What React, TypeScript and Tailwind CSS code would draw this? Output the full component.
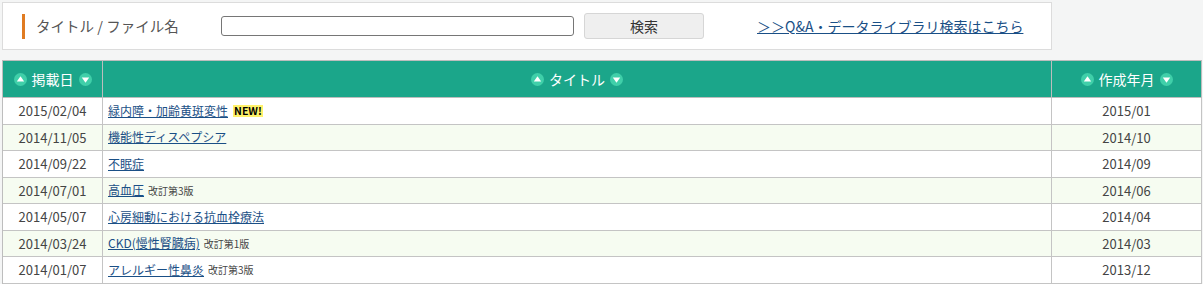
import React from "react";

const rows = [
  { date: "2015/02/04", title: "緑内障・加齢黄斑変性", note: "", isNew: true, ym: "2015/01" },
  { date: "2014/11/05", title: "機能性ディスペプシア", note: "", isNew: false, ym: "2014/10" },
  { date: "2014/09/22", title: "不眠症", note: "", isNew: false, ym: "2014/09" },
  { date: "2014/07/01", title: "高血圧", note: "改訂第3版", isNew: false, ym: "2014/06" },
  { date: "2014/05/07", title: "心房細動における抗血栓療法", note: "", isNew: false, ym: "2014/04" },
  { date: "2014/03/24", title: "CKD(慢性腎臓病)", note: "改訂第1版", isNew: false, ym: "2014/03" },
  { date: "2014/01/07", title: "アレルギー性鼻炎", note: "改訂第3版", isNew: false, ym: "2013/12" },
];

function SortIcon({ up }: { up: boolean }) {
  return (
    <svg width="13" height="13" viewBox="0 0 13 13" className="shrink-0">
      <circle cx="6.5" cy="6.5" r="6.5" fill="#40cfa9" />
      {up ? (
        <path d="M6.5 3.2 L10.2 8.6 L2.8 8.6 Z" fill="#fff" />
      ) : (
        <path d="M2.8 4.4 L10.2 4.4 L6.5 9.8 Z" fill="#fff" />
      )}
    </svg>
  );
}

function HeadCell({ label, className }: { label: string; className: string }) {
  return (
    <div className={`flex items-center justify-center gap-[5px] text-[14px] text-white ${className}`}>
      <SortIcon up />
      <span>{label}</span>
      <SortIcon up={false} />
    </div>
  );
}

export default function App() {
  return (
    <div
      className="w-[1203px] h-[284px] overflow-hidden bg-[#f4f5f5] text-[#444]"
      style={{ fontFamily: '"Noto Sans CJK JP", "Noto Sans", sans-serif' }}
    >
      {/* 検索 */}
      <div className="ml-[2px] mt-[2px] w-[1050px] h-[48px] bg-white border border-[#dcdcdc] flex items-center">
        <div className="ml-[19px] w-[3px] h-[25px] bg-[#e07b22]" />
        <span className="ml-[11px] text-[14.5px] text-[#555] w-[185px]">タイトル / ファイル名</span>
        <input className="w-[353px] h-[20px] border border-[#767676] rounded-[3px] bg-white" />
        <button className="ml-[10px] w-[120px] h-[26px] border border-[#d6d6d6] rounded-[3px] bg-[#efefef] text-[14px] text-[#333]">
          検索
        </button>
        <a href="#" className="ml-[53px] text-[14px] text-[#1a4f86] underline">
          ＞＞Q&amp;A・データライブラリ検索はこちら
        </a>
      </div>

      {/* 一覧 */}
      <div className="ml-[2px] mt-[10px] w-[1200px] border-l border-t border-[#bdbdbd]">
        <div className="flex h-[37px] bg-[#1ba68a] border-b border-[#bdbdbd]">
          <HeadCell label="掲載日" className="w-[100px] border-r border-[#bdbdbd]" />
          <HeadCell label="タイトル" className="flex-1 border-r border-[#bdbdbd]" />
          <HeadCell label="作成年月" className="w-[150px] border-r border-[#bdbdbd]" />
        </div>
        {rows.map((r, i) => (
          <div
            key={r.date}
            className={`flex h-[26.5px] border-b border-[#c4c4c4] text-[13px] ${i % 2 ? "bg-[#f6fcf1]" : "bg-white"}`}
          >
            <div className="w-[100px] border-r border-[#c4c4c4] flex items-center justify-center">{r.date}</div>
            <div className="flex-1 border-r border-[#c4c4c4] flex items-center pl-[5px]">
              <a href="#" className="text-[12px] text-[#1a4f86] underline">{r.title}</a>
              {r.note && <span className="ml-[4px] text-[10px] text-[#444]">{r.note}</span>}
              {r.isNew && (
                <span className="ml-[5px] px-[1px] bg-[#fff26a] text-[10.5px] leading-[12px] font-bold text-black">
                  NEW!
                </span>
              )}
            </div>
            <div className="w-[150px] border-r border-[#c4c4c4] flex items-center justify-center">{r.ym}</div>
          </div>
        ))}
      </div>
    </div>
  );
}
